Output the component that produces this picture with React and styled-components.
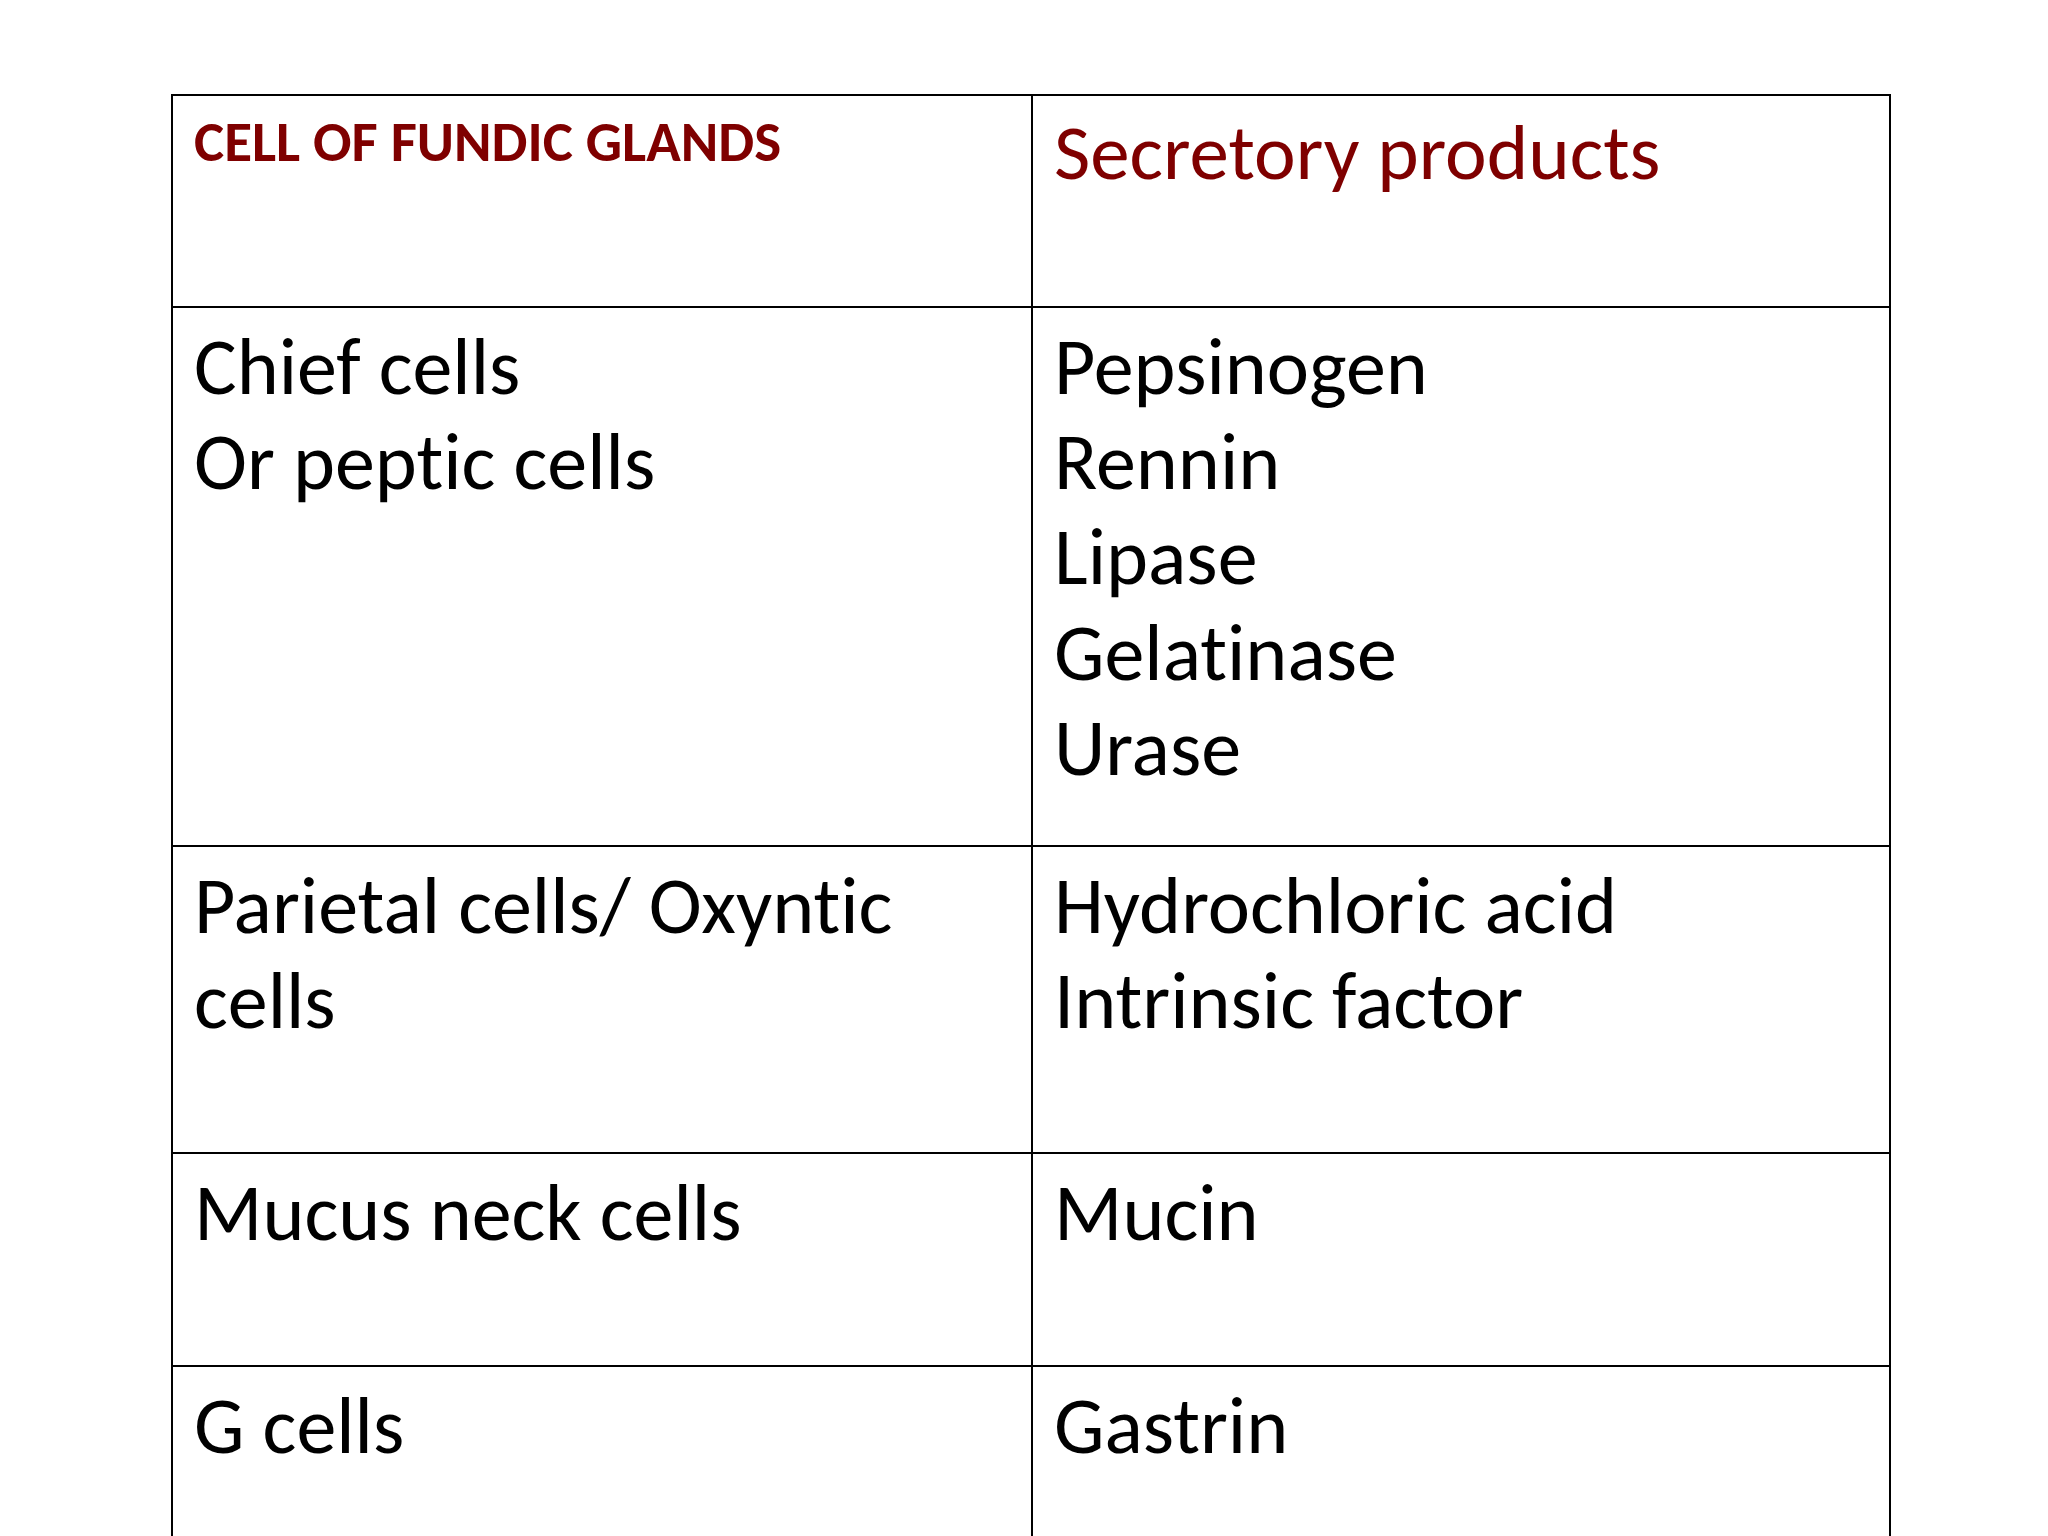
import React from "react";
import styled, { createGlobalStyle } from "styled-components";

const Global = createGlobalStyle`
  html, body { margin: 0; padding: 0; background: #ffffff; }
  body {
    font-family: Carlito, Lato, "Liberation Sans", sans-serif;
    font-variant-ligatures: none;
    font-feature-settings: "liga" 0, "clig" 0;
  }
`;

const Page = styled.div`
  width: 2048px;
  height: 1536px;
  overflow: hidden;
  padding: 94px 0 0 171px;
  box-sizing: border-box;
`;

const Table = styled.table`
  border-collapse: collapse;
  table-layout: fixed;
  width: 1718px;
`;

const Row = styled.tr`
  height: ${(p) => p.$h}px;
`;

const Cell = styled.td`
  border: 2px solid #000000;
  vertical-align: top;
  padding: ${(p) => p.$pt ?? 11}px 20px 0 21px;
  box-sizing: border-box;
  width: ${(p) => (p.$first ? 860 : 858)}px;
`;

const HeadTitle = styled.div`
  color: #7f0000;
  font-weight: 700;
  font-size: 57px;
  line-height: 1.2;
`;

const HeadText = styled.div`
  color: #7f0000;
  font-size: 79px;
  line-height: 1.2;
`;

const Lines = styled.div`
  color: #000000;
  font-size: 80px;
  line-height: 1.19;
`;

const rows = [
  { h: 539, left: ["Chief cells", "Or peptic cells"], right: ["Pepsinogen", "Rennin", "Lipase", "Gelatinase", "Urase"] },
  { h: 307, left: ["Parietal cells/ Oxyntic cells"], right: ["Hydrochloric acid", "Intrinsic factor"] },
  { h: 213, left: ["Mucus neck cells"], right: ["Mucin"] },
  { h: 300, left: ["G cells"], right: ["Gastrin"] },
];

export default function App() {
  return (
    <>
      <Global />
      <Page>
        <Table>
          <tbody>
            <Row $h={212}>
              <Cell $first $pt={12}>
                <HeadTitle>CELL OF FUNDIC GLANDS</HeadTitle>
              </Cell>
              <Cell $pt={9}>
                <HeadText>Secretory products</HeadText>
              </Cell>
            </Row>
            {rows.map((r, i) => (
              <Row key={i} $h={r.h}>
                <Cell $first>
                  <Lines>
                    {r.left.map((t) => (
                      <div key={t}>{t}</div>
                    ))}
                  </Lines>
                </Cell>
                <Cell>
                  <Lines>
                    {r.right.map((t) => (
                      <div key={t}>{t}</div>
                    ))}
                  </Lines>
                </Cell>
              </Row>
            ))}
          </tbody>
        </Table>
      </Page>
    </>
  );
}
